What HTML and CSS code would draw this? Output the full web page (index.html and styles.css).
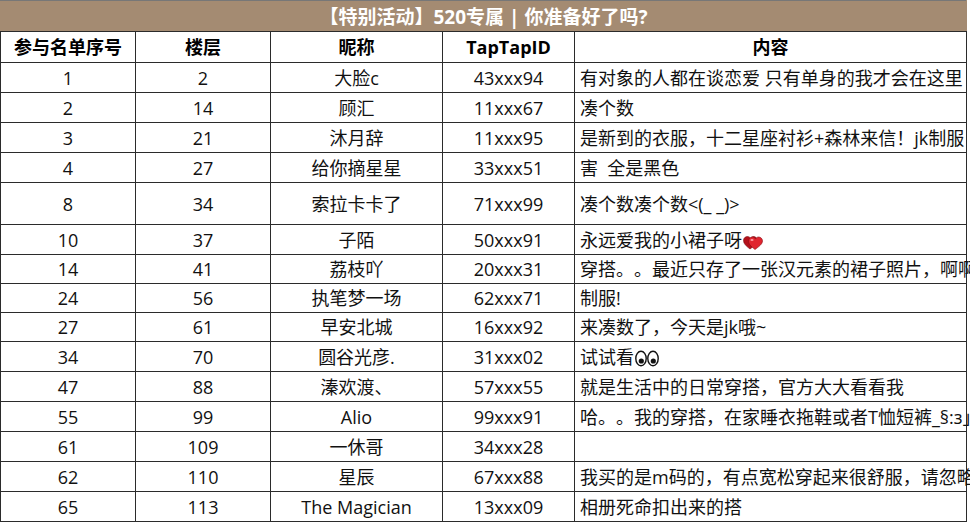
FILE: index.html
```html
<!DOCTYPE html>
<html lang="zh-CN">
<head>
<meta charset="utf-8">
<title>【特别活动】520专属</title>
<link rel="stylesheet" href="styles.css">
</head>
<body>
<div class="sheet">
<table class="grid">
  <colgroup>
    <col class="c-no"><col class="c-floor"><col class="c-nick"><col class="c-id"><col class="c-text">
  </colgroup>
  <thead>
    <tr class="title-row"><th colspan="5" class="title">【特别活动】520专属 | 你准备好了吗?</th></tr>
    <tr class="head-row">
      <th>参与名单序号</th><th>楼层</th><th>昵称</th><th>TapTapID</th><th>内容</th>
    </tr>
  </thead>
  <tbody>
    <tr class="r30"><td>1</td><td>2</td><td>大脸c</td><td>43xxx94</td><td class="txt">有对象的人都在谈恋爱 只有单身的我才会在这里</td></tr>
    <tr class="r30"><td>2</td><td>14</td><td>顾汇</td><td>11xxx67</td><td class="txt">凑个数</td></tr>
    <tr class="r30"><td>3</td><td>21</td><td>沐月辞</td><td>11xxx95</td><td class="txt">是新到的衣服，十二星座衬衫+森林来信！jk制服</td></tr>
    <tr class="r30"><td>4</td><td>27</td><td>给你摘星星</td><td>33xxx51</td><td class="txt">害&nbsp; 全是黑色</td></tr>
    <tr class="r42"><td>8</td><td>34</td><td>索拉卡卡了</td><td>71xxx99</td><td class="txt">凑个数凑个数&lt;(_ _)&gt;</td></tr>
    <tr class="r30"><td>10</td><td>37</td><td>子陌</td><td>50xxx91</td><td class="txt">永远爱我的小裙子呀<svg class="emoji heart" viewBox="0 0 20 16" aria-hidden="true"><path d="M7 15 C3 12 0.5 9.5 0.5 6.5 C0.5 4 2.5 2.5 4.5 2.5 C6 2.5 7 3.5 7.5 4.5 C8 3.5 9 2.5 10.5 2.5 C12.5 2.5 14 4 14 6.5 C14 9.5 11 12 7 15 Z" fill="#b3101a" stroke="#7a0a10" stroke-width="0.6"/><path d="M12 15.5 C8 12.5 5.5 10 5.5 7 C5.5 4.5 7.5 3 9.5 3 C11 3 12 4 12.5 5 C13 4 14 3 15.5 3 C17.5 3 19.5 4.5 19.5 7 C19.5 10 16 12.5 12 15.5 Z" fill="#e0252f" stroke="#8a0c14" stroke-width="0.6"/><ellipse cx="9" cy="6" rx="1.6" ry="1" fill="#ff9aa0"/></svg></td></tr>
    <tr class="r29"><td>14</td><td>41</td><td>荔枝吖</td><td>20xxx31</td><td class="txt">穿搭。。最近只存了一张汉元素的裙子照片，啊啊</td></tr>
    <tr class="r29"><td>24</td><td>56</td><td>执笔梦一场</td><td>62xxx71</td><td class="txt">制服!</td></tr>
    <tr class="r29"><td>27</td><td>61</td><td>早安北城</td><td>16xxx92</td><td class="txt">来凑数了，今天是jk哦~</td></tr>
    <tr class="r30"><td>34</td><td>70</td><td>圆谷光彦.</td><td>31xxx02</td><td class="txt">试试看<svg class="emoji eyes" viewBox="0 0 24 17" aria-hidden="true"><ellipse cx="6" cy="8.5" rx="5.2" ry="7.3" fill="#fff" stroke="#111" stroke-width="1.4"/><ellipse cx="18" cy="8.5" rx="5.2" ry="7.3" fill="#fff" stroke="#111" stroke-width="1.4"/><circle cx="6.3" cy="11" r="2.6" fill="#111"/><circle cx="18.3" cy="11" r="2.6" fill="#111"/></svg></td></tr>
    <tr class="r30"><td>47</td><td>88</td><td>溱欢渡、</td><td>57xxx55</td><td class="txt">就是生活中的日常穿搭，官方大大看看我</td></tr>
    <tr class="r30"><td>55</td><td>99</td><td>Alio</td><td>99xxx91</td><td class="txt">哈。。我的穿搭，在家睡衣拖鞋或者T恤短裤_§:з」∠)_</td></tr>
    <tr class="r30"><td>61</td><td>109</td><td>一休哥</td><td>34xxx28</td><td class="txt"></td></tr>
    <tr class="r30"><td>62</td><td>110</td><td>星辰</td><td>67xxx88</td><td class="txt">我买的是m码的，有点宽松穿起来很舒服，请忽略</td></tr>
    <tr class="r30"><td>65</td><td>113</td><td>The Magician</td><td>13xxx09</td><td class="txt">相册死命扣出来的搭</td></tr>
  </tbody>
</table>
</div>
</body>
</html>
```

FILE: styles.css
```css
html, body {
  margin: 0;
  padding: 0;
  background: #ffffff;
  overflow: hidden;
}

.sheet {
  width: 970px;
  height: 525px;
  overflow: hidden;
}

.grid {
  table-layout: fixed;
  border-collapse: collapse;
  width: 966px;
  font-family: "Open Sans", "Noto Sans CJK SC", sans-serif;
  font-size: 18px;
  color: #111;
  border-top: 1px solid #777;
  border-right: 1px solid #666;
  font-feature-settings: "chws" 0, "halt" 0, "palt" 0;
  text-spacing-trim: space-all;
}

.c-no { width: 135px; }
.c-floor { width: 135px; }
.c-nick { width: 172px; }
.c-id { width: 132px; }
.c-text { width: 392px; }

.grid th,
.grid td {
  border: 1px solid #2b2b2b;
  padding: 0;
  text-align: center;
  vertical-align: middle;
  white-space: nowrap;
  line-height: 20px;
}

.title-row th.title {
  height: 29px;
  background: #a48b72;
  color: #ffffff;
  font-size: 19px;
  font-weight: 700;
  border-top: 1px solid #777;
  border-left: 1px solid #a48b72;
  border-right: 1px solid #a48b72;
  padding-top: 1px;
}

.head-row th {
  height: 30px;
  font-weight: 700;
  color: #000;
}

.r30 td { height: 29px; }
.r29 td { height: 28px; }
.r42 td { height: 41px; }

.grid td.txt {
  text-align: left;
  padding-left: 5px;
  overflow: visible;
}

.emoji {
  display: inline-block;
  vertical-align: -3px;
  margin-left: 1px;
}

.heart {
  width: 20px;
  height: 16px;
}

.eyes {
  width: 24px;
  height: 17px;
}
```
